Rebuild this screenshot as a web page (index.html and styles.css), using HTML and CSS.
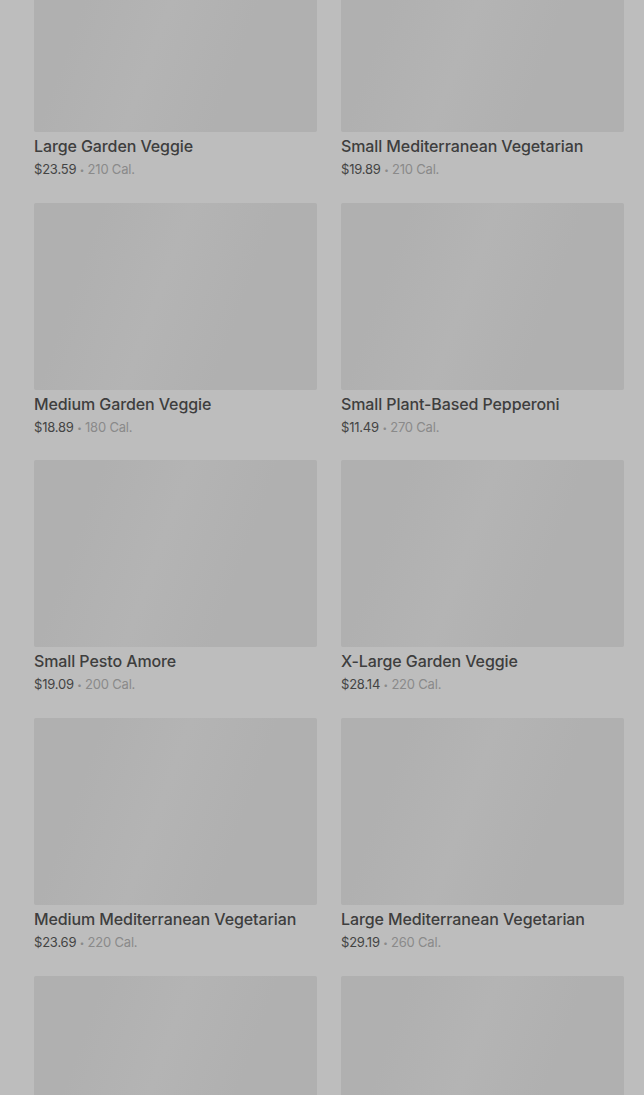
FILE: index.html
```html
<!DOCTYPE html>
<html lang="en">
<head>
    <meta charset="UTF-8">
    <meta name="viewport" content="width=device-width, initial-scale=1.0">
    <title>Menu</title>
    <link rel="stylesheet" href="styles.css">
</head>
<body>
    <div class="overlay">
        <div class="grid">
            <div class="item">
                <div class="thumb"></div>
                <div class="name">Large Garden Veggie</div>
                <div class="meta"><span class="price">$23.59</span> <span class="dot">•</span> 210 Cal.</div>
            </div>
            <div class="item">
                <div class="thumb"></div>
                <div class="name">Small Mediterranean Vegetarian</div>
                <div class="meta"><span class="price">$19.89</span> <span class="dot">•</span> 210 Cal.</div>
            </div>
            <div class="item">
                <div class="thumb"></div>
                <div class="name">Medium Garden Veggie</div>
                <div class="meta"><span class="price">$18.89</span> <span class="dot">•</span> 180 Cal.</div>
            </div>
            <div class="item">
                <div class="thumb"></div>
                <div class="name">Small Plant-Based Pepperoni</div>
                <div class="meta"><span class="price">$11.49</span> <span class="dot">•</span> 270 Cal.</div>
            </div>
            <div class="item">
                <div class="thumb"></div>
                <div class="name">Small Pesto Amore</div>
                <div class="meta"><span class="price">$19.09</span> <span class="dot">•</span> 200 Cal.</div>
            </div>
            <div class="item">
                <div class="thumb"></div>
                <div class="name">X-Large Garden Veggie</div>
                <div class="meta"><span class="price">$28.14</span> <span class="dot">•</span> 220 Cal.</div>
            </div>
            <div class="item">
                <div class="thumb"></div>
                <div class="name">Medium Mediterranean Vegetarian</div>
                <div class="meta"><span class="price">$23.69</span> <span class="dot">•</span> 220 Cal.</div>
            </div>
            <div class="item">
                <div class="thumb"></div>
                <div class="name">Large Mediterranean Vegetarian</div>
                <div class="meta"><span class="price">$29.19</span> <span class="dot">•</span> 260 Cal.</div>
            </div>
            <div class="item">
                <div class="thumb"></div>
            </div>
            <div class="item">
                <div class="thumb"></div>
            </div>
        </div>
    </div>
</body>
</html>
```

FILE: styles.css
```css
body {
    margin: 0;
    background-color: #bdbdbd;
    font-family: Inter, "Noto Sans", sans-serif;
    overflow: hidden;
}
.overlay {
    height: 1095px;
    overflow: hidden;
}
.grid {
    display: grid;
    grid-template-columns: 283px 283px;
    column-gap: 24px;
    row-gap: 25.67px;
    padding: 0 20px 0 34px;
    margin-top: -55px;
}
.item {
    display: flex;
    flex-direction: column;
}
.thumb {
    height: 187px;
    border-radius: 2px;
    background-color: #b0b0b0;
    background-image: linear-gradient(110deg, #b0b0b0 20%, #b4b4b4 45%, #b0b0b0 70%);
}
.name {
    margin-top: 4px;
    font-size: 16px;
    line-height: 20px;
    font-weight: 500;
    color: #3e3e3e;
    letter-spacing: -0.1px;
    white-space: nowrap;
}
.meta {
    margin-top: 5px;
    height: 16px;
    font-size: 13px;
    line-height: 16px;
    color: #8a8a8a;
    letter-spacing: -0.2px;
}
.price {
    color: #444444;
}
.dot {
    font-size: 8px;
    line-height: 0;
    vertical-align: 1px;
}
```
